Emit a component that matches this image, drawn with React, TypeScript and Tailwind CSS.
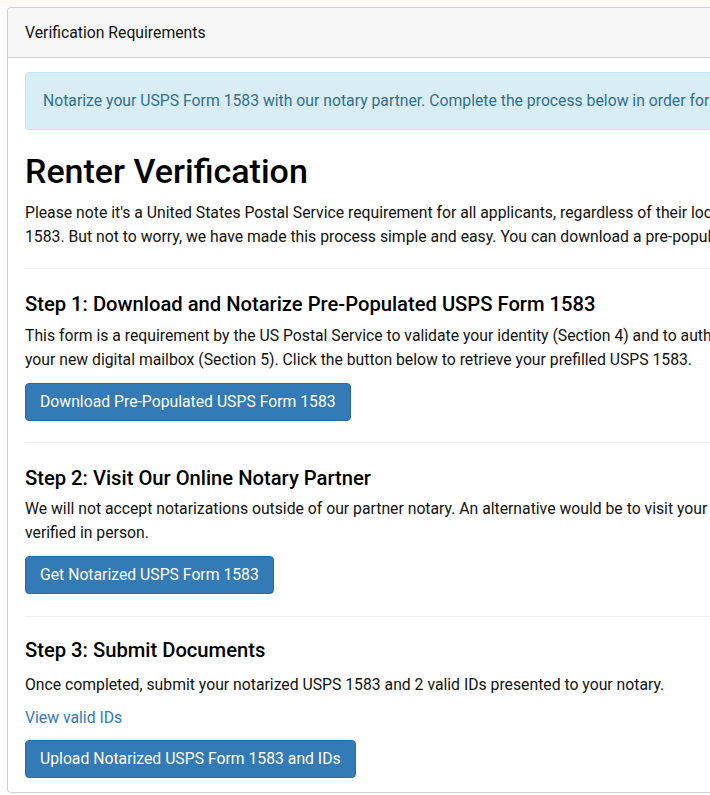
export default function App() {
  return (
    <div className="w-[710px] h-[795px] overflow-hidden bg-white font-['Roboto',sans-serif] text-[15.75px] leading-6 text-[#111]">
      <div className="h-[7px] bg-[#fdf9f4]" />
      <div className="ml-[7px] w-[1300px] rounded border border-[#cfcfcf] bg-white">
        {/* Card header */}
        <div className="border-b border-[#cfcfcf] bg-[#f7f7f7] px-[17px] pt-[13px] pb-[12px] rounded-t">
          Verification Requirements
        </div>

        {/* Card body */}
        <div className="px-[17px] pt-[14px] pb-[14px]">
          <div className="mb-[20px] rounded border border-[#bce8f1] bg-[#d9edf7] px-[17px] py-[16px] text-[#31708f]">
            Notarize your USPS Form 1583 with our notary partner. Complete the process below in order for your mailbox to be activated.
          </div>

          <h1 className="mb-2 text-[34px] font-medium leading-[43px] text-black">Renter Verification</h1>
          <p>
            Please note it's a United States Postal Service requirement for all applicants, regardless of their location, to complete and notarize USPS Form
            <br />
            1583. But not to worry, we have made this process simple and easy. You can download a pre-populated form below and get it notarized online.
          </p>

          <hr className="mt-[19px] mb-5 border-t border-[#eee]" />

          <section>
            <h3 className="mb-[5px] text-[20.2px] font-medium leading-[30px] text-black">
              Step 1: Download and Notarize Pre-Populated USPS Form 1583
            </h3>
            <p className="mb-[11px]">
              This form is a requirement by the US Postal Service to validate your identity (Section 4) and to authorize us to receive mail on behalf of
              <br />
              your new digital mailbox (Section 5). Click the button below to retrieve your prefilled USPS 1583.
            </p>
            <button className="rounded border border-[#2e6da4] bg-[#337ab7] px-[14px] py-[6px] leading-6 text-white">
              Download Pre-Populated USPS Form 1583
            </button>
          </section>

          <hr className="mt-[21px] mb-5 border-t border-[#eee]" />

          <section>
            <h3 className="mb-[4px] text-[20.2px] font-medium leading-[30px] text-black">
              Step 2: Visit Our Online Notary Partner
            </h3>
            <p className="mb-[11px]">
              We will not accept notarizations outside of our partner notary. An alternative would be to visit your local post office to get your form
              <br />
              verified in person.
            </p>
            <button className="rounded border border-[#2e6da4] bg-[#337ab7] px-[14px] py-[6px] leading-6 text-white">
              Get Notarized USPS Form 1583
            </button>
          </section>

          <hr className="mt-[22px] mb-[18px] border-t border-[#eee]" />

          <section>
            <h3 className="mb-[8px] text-[20.2px] font-medium leading-[30px] text-black">
              Step 3: Submit Documents
            </h3>
            <p className="mb-[9px]">
              Once completed, submit your notarized USPS 1583 and 2 valid IDs presented to your notary.
            </p>
            <a href="#" className="block mb-[10px] text-[#337ab7]">View valid IDs</a>
            <button className="rounded border border-[#2e6da4] bg-[#337ab7] px-[14px] py-[6px] leading-6 text-white">
              Upload Notarized USPS Form 1583 and IDs
            </button>
          </section>
        </div>
      </div>
    </div>
  );
}
